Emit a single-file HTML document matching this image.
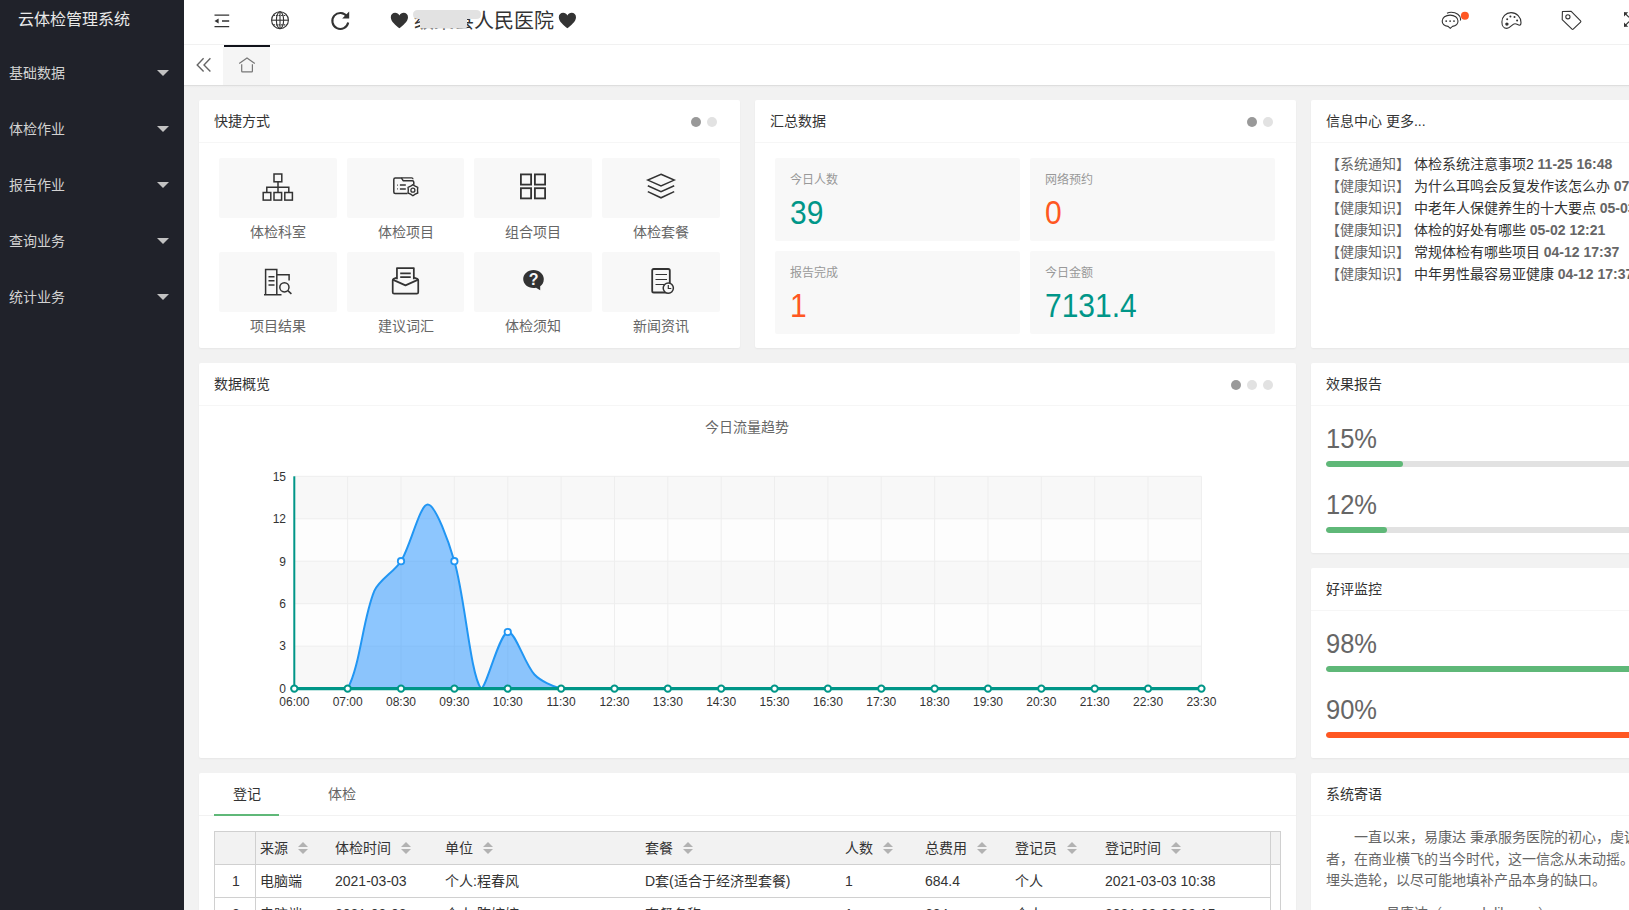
<!DOCTYPE html><html lang="zh-CN"><head><meta charset="utf-8"><title>云体检管理系统</title><style>
*{margin:0;padding:0;box-sizing:border-box}
html,body{width:1629px;height:910px;overflow:hidden}
body{position:relative;background:#f2f2f2;font-family:"Liberation Sans",sans-serif;font-size:14px;color:#333}
.a{position:absolute}
.side{left:0;top:0;width:184px;height:910px;background:#20222a}
.logo{left:18px;top:8px;font-size:16px;color:#e9e9e9;line-height:24px;white-space:nowrap}
.mi{left:9px;font-size:14px;color:#d2d2d2;line-height:20px;white-space:nowrap;font-weight:500}
.tri{left:157px;width:0;height:0;border-left:6px solid transparent;border-right:6px solid transparent;border-top:6px solid #c2c2c2}
.hdr{left:184px;top:0;width:1445px;height:45px;background:#fff;border-bottom:1px solid #f1f1f1}
.tabs{left:184px;top:45px;width:1445px;height:40px;background:#fff}
.card{background:#fff;border-radius:2px;overflow:hidden;box-shadow:0 1px 2px 0 rgba(0,0,0,.05)}
.ch{left:0;top:0;right:0;height:43px;border-bottom:1px solid #f6f6f6;padding-left:15px;line-height:42px;font-size:14px;color:#333;white-space:nowrap}
.box{background:#f8f8f8;border-radius:2px}
.lbl{font-size:14px;color:#666;text-align:center;width:118px;line-height:20px;white-space:nowrap}
.dot{width:10px;height:10px;border-radius:50%;background:#e2e2e2}
.dk{background:#999}
.sb{background:#f8f8f8;border-radius:2px;width:245px;height:83px}
.sl{left:15px;top:14px;font-size:12px;color:#999;line-height:16px;white-space:nowrap}
.sn{left:15px;top:39px;font-size:30px;line-height:34px;white-space:nowrap;transform:scaleY(1.1);transform-origin:0 27.4px}
.info{left:15px;font-size:14px;line-height:20px;white-space:nowrap;color:#333}
.info b{font-weight:bold;color:#666}
.info i{font-style:normal;color:#666}
.big{left:15px;font-size:26px;color:#666;line-height:30px;white-space:nowrap;transform:scale(0.98,1.08);transform-origin:0 24px}
.pb{left:15px;width:511px;height:6px;border-radius:20px;background:#e2e2e2;overflow:hidden}
.pf{left:0;top:0;height:6px;border-radius:20px}
.ax{font-size:12px;color:#333;white-space:nowrap;line-height:14px}
.th{font-size:14px;color:#333;white-space:nowrap;line-height:20px}
.sort{width:0;height:0;border-left:5px solid transparent;border-right:5px solid transparent}
</style></head><body>
<div class="a side">
<div class="a logo">云体检管理系统</div>
<div class="a mi" style="top:63px">基础数据</div>
<div class="a tri" style="top:70px"></div>
<div class="a mi" style="top:119px">体检作业</div>
<div class="a tri" style="top:126px"></div>
<div class="a mi" style="top:175px">报告作业</div>
<div class="a tri" style="top:182px"></div>
<div class="a mi" style="top:231px">查询业务</div>
<div class="a tri" style="top:238px"></div>
<div class="a mi" style="top:287px">统计业务</div>
<div class="a tri" style="top:294px"></div>
</div>
<div class="a hdr"></div>
<svg class="a" style="left:210px;top:8px" width="24" height="26" viewBox="210 8 24 26"><path d="M214.5 15.2H229.2M222 21H229.2M214.5 26.6H229.2" stroke="#333" stroke-width="1.3" fill="none"/><path d="M214.5 21L218.6 18.4V23.6Z" fill="#333"/></svg>
<svg class="a" style="left:268px;top:8px" width="24" height="26" viewBox="268 8 24 26"><g fill="none" stroke="#333" stroke-width="1.1"><circle cx="280" cy="20.2" r="8.4"/><path d="M271.6 20.2H288.4"/><ellipse cx="280" cy="20.2" rx="3.6" ry="8.4"/><path d="M280 11.8V28.6"/><path d="M273.3 15.5H286.7M273.3 24.9H286.7" stroke-dasharray="1.6 1"/></g></svg>
<svg class="a" style="left:328px;top:8px" width="24" height="26" viewBox="328 8 24 26"><path d="M347 16.5A8 8 0 1 0 348.2 22.5" fill="none" stroke="#333" stroke-width="2.1"/><path d="M349.2 11.6V18.6H342.2Z" fill="#333"/></svg>
<svg class="a" style="left:390px;top:12px" width="20" height="17" viewBox="0 0 20 17"><path d="M9.4 16.3C6 13.3 0.8 9.6 0.8 5.2C0.8 2.6 2.8 0.8 5.1 0.8C7 0.8 8.5 1.9 9.4 3.4C10.3 1.9 11.8 0.8 13.7 0.8C16 0.8 18 2.6 18 5.2C18 9.6 12.8 13.3 9.4 16.3Z" fill="#333"/></svg>
<div class="a" style="left:414px;top:8px;font-size:20px;line-height:26px;color:#333;white-space:nowrap">级某县人民医院</div>
<svg class="a" style="left:412px;top:9px" width="70" height="21" viewBox="412 9 70 21"><path d="M418 10H476Q481 10 481 14.5Q481 19 476 19H467V26Q467 28.6 464.5 28.6H422.5Q420 28.6 420 26V19H418Q413 19 413 14.5Q413 10 418 10Z" fill="#e2e2e2"/></svg>
<svg class="a" style="left:558px;top:12px" width="20" height="17" viewBox="0 0 20 17"><path d="M9.4 16.3C6 13.3 0.8 9.6 0.8 5.2C0.8 2.6 2.8 0.8 5.1 0.8C7 0.8 8.5 1.9 9.4 3.4C10.3 1.9 11.8 0.8 13.7 0.8C16 0.8 18 2.6 18 5.2C18 9.6 12.8 13.3 9.4 16.3Z" fill="#333"/></svg>
<svg class="a" style="left:1436px;top:6px" width="36" height="28" viewBox="1436 6 36 28"><g fill="none" stroke="#333" stroke-width="1.1"><path d="M1450.3 28.3L1448 26.4C1444.6 26 1442.2 23.8 1442.2 21C1442.2 17.7 1445.7 15.1 1450.1 15.1C1454.5 15.1 1458 17.7 1458 21C1458 23.8 1455.6 26 1452.4 26.4Z"/><path d="M1447 13.3C1448.3 12.6 1449.6 12.3 1451.2 12.3C1456.3 12.3 1460.6 15.3 1460.6 19.2C1460.6 19.6 1460.5 20.1 1460.3 20.5"/></g><g fill="#333"><circle cx="1446.2" cy="21.1" r="0.9"/><circle cx="1450.1" cy="21.1" r="0.9"/><circle cx="1454" cy="21.1" r="0.9"/></g><circle cx="1464.9" cy="15.8" r="4" fill="#ff5722"/></svg>
<svg class="a" style="left:1498px;top:8px" width="28" height="24" viewBox="1498 8 28 24"><path d="M1511 12.6C1516.8 12.6 1521 17.3 1521 22.5C1521 24.3 1520.6 25.2 1519.5 25.2C1518 25.2 1517 23.7 1515 23.7C1512.2 23.7 1510.2 28.4 1506.8 28.4C1503.6 28.4 1501.9 25.3 1501.9 21.9C1501.9 16.9 1505.8 12.6 1511 12.6Z" fill="none" stroke="#333" stroke-width="1.1"/><g fill="#333"><circle cx="1507.2" cy="19.3" r="1"/><circle cx="1510.4" cy="16.5" r="1"/><circle cx="1514.5" cy="17.1" r="1"/><circle cx="1517.1" cy="20.5" r="1"/><circle cx="1506.9" cy="24.1" r="1.7"/></g></svg>
<svg class="a" style="left:1558px;top:8px" width="28" height="24" viewBox="1558 8 28 24"><path d="M1562.4 11.5L1571.2 11.3L1580.6 20.9Q1581.2 21.5 1580.6 22.1L1573.2 29.2Q1572.6 29.8 1572 29.2L1562.2 19.7Z" fill="none" stroke="#333" stroke-width="1.1" stroke-linejoin="round"/><circle cx="1567.9" cy="16.8" r="2.1" fill="none" stroke="#333" stroke-width="1.1"/></svg>
<svg class="a" style="left:1620px;top:8px" width="9" height="24" viewBox="1620 8 9 24"><path d="M1624.3 12.6L1629 17.3M1624.3 26.3L1629 21.6" stroke="#333" stroke-width="1.1" fill="none"/><path d="M1624 12.2H1628.2L1624 16.4Z M1624 26.8H1628.2L1624 22.6Z" fill="#333"/></svg>
<div class="a tabs"></div>
<div class="a" style="left:184px;top:85px;width:1445px;height:1px;background:#dedede"></div>
<div class="a" style="left:184px;top:86px;width:1445px;height:2px;background:linear-gradient(#ececec,#f2f2f2)"></div>
<svg class="a" style="left:194px;top:55px" width="20" height="20" viewBox="194 55 20 20"><path d="M203.6 58.2L197.2 64.9L203.6 71.6M210.4 58.2L204 64.9L210.4 71.6" fill="none" stroke="#666" stroke-width="1.4"/></svg>
<div class="a" style="left:223px;top:47px;width:47px;height:38px;background:#f5f5f5"></div>
<div class="a" style="left:224px;top:45px;width:46px;height:2px;background:#10121a"></div>
<svg class="a" style="left:236px;top:55px" width="22" height="20" viewBox="236 55 22 20"><path d="M239.2 63.6L247 58L254.8 63.6" fill="none" stroke="#777" stroke-width="1.2"/><path d="M241.7 64.3V71.2Q241.7 71.8 242.3 71.8H251.8Q252.4 71.8 252.4 71.2V64.3" fill="none" stroke="#777" stroke-width="1.2"/></svg>
<div class="a card" style="left:199px;top:100px;width:541px;height:248px">
<div class="a ch">快捷方式</div>
<div class="a box" style="left:20px;top:58px;width:118px;height:60px"></div><svg class="a" style="left:20px;top:58px" width="118" height="60" viewBox="-59 -29 118 60"><g fill="none" stroke="#333" stroke-width="1.5"><rect x="-4" y="-13" width="7.8" height="7.8"/><path d="M0-5.2V0.2M-11.2 5.5V0.2H10.8V5.5M0 0.2V5.5"/><rect x="-14.8" y="5.5" width="7.6" height="7.6"/><rect x="-4" y="5.5" width="7.6" height="7.6"/><rect x="6.8" y="5.5" width="7.6" height="7.6"/></g></svg><div class="a lbl" style="left:20px;top:122px">体检科室</div><div class="a box" style="left:148px;top:58px;width:117px;height:60px"></div><svg class="a" style="left:148px;top:58px" width="118" height="60" viewBox="-59 -29 118 60"><g fill="none" stroke="#333" stroke-width="1.5" stroke-linejoin="round"><path d="M1.5 6.5H-10.7Q-12.2 6.5 -12.2 5V-7.6Q-12.2 -9.1 -10.7 -9.1H-4.6L-2.9 -6.3H6.3Q7.8 -6.3 7.8 -4.8V-2.2"/><path d="M-4.6 -9.1H5.6Q7 -9.1 7 -7.7" stroke-width="1.3"/><path d="M-6.1 -1.9H-0.2M-6.1 1.9H-0.2" stroke-width="1.5"/><path d="M-8.9 -1.9H-8.1M-8.9 1.9H-8.1" stroke-width="1.2"/></g><path d="M6.90 -2.40 L9.20 -0.78 L11.75 0.40 L11.50 3.20 L11.75 6.00 L9.20 7.18 L6.90 8.80 L4.60 7.18 L2.05 6.00 L2.30 3.20 L2.05 0.40 L4.60 -0.78Z" fill="#f8f8f8" stroke="#333" stroke-width="1.4" stroke-linejoin="round"/><circle cx="6.9" cy="3.2" r="2" fill="none" stroke="#333" stroke-width="1.3"/></svg><div class="a lbl" style="left:148px;top:122px">体检项目</div><div class="a box" style="left:275px;top:58px;width:118px;height:60px"></div><svg class="a" style="left:275px;top:58px" width="118" height="60" viewBox="-59 -29 118 60"><g fill="none" stroke="#333" stroke-width="1.8"><rect x="-12.1" y="-12.6" width="10.2" height="10.2"/><rect x="1.9" y="-12.6" width="10.2" height="10.2"/><rect x="-12.1" y="1.2" width="10.2" height="10.2"/><rect x="1.9" y="1.2" width="10.2" height="10.2"/></g></svg><div class="a lbl" style="left:275px;top:122px">组合项目</div><div class="a box" style="left:403px;top:58px;width:118px;height:60px"></div><svg class="a" style="left:403px;top:58px" width="118" height="60" viewBox="-59 -29 118 60"><g fill="none" stroke="#333" stroke-width="1.5" stroke-linejoin="miter"><path d="M0 -12.8L13.2 -6.9L0 -1.1L-13.2 -6.9Z"/><path d="M-13.2 -1.2L0 4.6L13.2 -1.2M-13.2 4.6L0 10.8L13.2 4.6"/></g></svg><div class="a lbl" style="left:403px;top:122px">体检套餐</div><div class="a box" style="left:20px;top:152px;width:118px;height:60px"></div><svg class="a" style="left:20px;top:152px" width="118" height="60" viewBox="-59 -28 118 60"><g fill="none" stroke="#333" stroke-width="1.5"><path d="M-12.4 14.8V-10.4H-1.2V14.8M-14 14.8H3.5M-1.2 -5.3H11.1V0.5"/><path d="M-9.5 -3.3H-3.5M-9.5 0.8H-3.5M-9.5 4.9H-3.5"/><circle cx="6.4" cy="7.3" r="4.6"/><path d="M9.8 10.6L13.4 13.9"/></g></svg><div class="a lbl" style="left:20px;top:216px">项目结果</div><div class="a box" style="left:148px;top:152px;width:117px;height:60px"></div><svg class="a" style="left:148px;top:152px" width="118" height="60" viewBox="-59 -28 118 60"><g transform="translate(-1,-1.6) scale(0.96)" fill="none" stroke="#333" stroke-width="1.8" stroke-linejoin="round"><path d="M-8.4 1V-10.8H9.2V1"/><path d="M-5 -5.2H6M-5 -1.3H6"/><path d="M-8.4 -1L-11.8 0.5Q-12.8 1 -12.8 2V14.3Q-12.8 15.8 -11.3 15.8H12.3Q13.8 15.8 13.8 14.3V2Q13.8 1 12.8 0.5L9.2 -1"/><path d="M-12.8 1.3L0.5 7.3L13.8 1.3"/></g></svg><div class="a lbl" style="left:148px;top:216px">建议词汇</div><div class="a box" style="left:275px;top:152px;width:118px;height:60px"></div><svg class="a" style="left:275px;top:152px" width="118" height="60" viewBox="-59 -28 118 60"><path d="M0.5 -10C6.2 -10 10.8 -6 10.8 -1C10.8 2.5 9.3 4.8 7.2 6.2L7.2 10.3L3 7.7C2.2 7.9 1.4 8 0.5 8C-5.2 8 -9.8 4 -9.8 -1C-9.8 -6 -5.2 -10 0.5 -10Z" fill="#333"/><text x="0.6" y="4.8" font-size="16" font-weight="bold" fill="#f8f8f8" text-anchor="middle" font-family="Liberation Sans">?</text></svg><div class="a lbl" style="left:275px;top:216px">体检须知</div><div class="a box" style="left:403px;top:152px;width:118px;height:60px"></div><svg class="a" style="left:403px;top:152px" width="118" height="60" viewBox="-59 -28 118 60"><g fill="none" stroke="#333"><rect x="-8.8" y="-11" width="17.6" height="23.5" rx="1.6" stroke-width="1.8"/><path d="M-5.5 -5.5H6M-5.5 -0.5H6M-5.5 4.5H3" stroke-width="1.2"/></g><circle cx="7.3" cy="8.1" r="5.1" fill="#f8f8f8" stroke="#333" stroke-width="1.5"/><path d="M7.3 4.9V8.5H10.3" fill="none" stroke="#333" stroke-width="1.2"/></svg><div class="a lbl" style="left:403px;top:216px">新闻资讯</div><div class="a dot dk" style="left:492px;top:16.5px"></div><div class="a dot" style="left:508px;top:16.5px"></div>
</div>
<div class="a card" style="left:755px;top:100px;width:541px;height:248px">
<div class="a ch">汇总数据</div>
<div class="a sb" style="left:20px;top:58px"><div class="a sl">今日人数</div><div class="a sn" style="color:#009688">39</div></div><div class="a sb" style="left:275px;top:58px"><div class="a sl">网络预约</div><div class="a sn" style="color:#ff5722">0</div></div><div class="a sb" style="left:20px;top:151px"><div class="a sl">报告完成</div><div class="a sn" style="color:#ff5722">1</div></div><div class="a sb" style="left:275px;top:151px"><div class="a sl">今日金额</div><div class="a sn" style="color:#009688">7131.4</div></div><div class="a dot dk" style="left:492px;top:16.5px"></div><div class="a dot" style="left:508px;top:16.5px"></div>
</div>
<div class="a card" style="left:1311px;top:100px;width:541px;height:248px">
<div class="a ch">信息中心 更多...</div>
<div class="a info" style="top:54px"><i>【系统通知】</i> 体检系统注意事项2 <b>11-25 16:48</b></div><div class="a info" style="top:76px"><i>【健康知识】</i> 为什么耳鸣会反复发作该怎么办 <b>07-</b></div><div class="a info" style="top:98px"><i>【健康知识】</i> 中老年人保健养生的十大要点 <b>05-03 </b></div><div class="a info" style="top:120px"><i>【健康知识】</i> 体检的好处有哪些 <b>05-02 12:21</b></div><div class="a info" style="top:142px"><i>【健康知识】</i> 常规体检有哪些项目 <b>04-12 17:37</b></div><div class="a info" style="top:164px"><i>【健康知识】</i> 中年男性最容易亚健康 <b>04-12 17:37</b></div>
</div>
<div class="a card" style="left:199px;top:363px;width:1097px;height:395px">
<div class="a ch">数据概览</div>
<div class="a dot dk" style="left:1032px;top:17px"></div><div class="a dot" style="left:1048px;top:17px"></div><div class="a dot" style="left:1064px;top:17px"></div><div class="a" style="left:-1px;top:54px;width:1097px;text-align:center;font-size:14px;line-height:20px;color:#666">今日流量趋势</div>
</div>
<svg class="a" style="left:0;top:0" width="1629" height="910" viewBox="0 0 1629 910"><rect x="294.3" y="646.14" width="907.10" height="42.46" fill="#f8f8f8"/><rect x="294.3" y="603.68" width="907.10" height="42.46" fill="#fdfdfd"/><rect x="294.3" y="561.22" width="907.10" height="42.46" fill="#f8f8f8"/><rect x="294.3" y="518.76" width="907.10" height="42.46" fill="#fdfdfd"/><rect x="294.3" y="476.30" width="907.10" height="42.46" fill="#f8f8f8"/><path d="M294.3 688.60H1201.4" stroke="#eee" stroke-width="1"/><path d="M294.3 646.14H1201.4" stroke="#eee" stroke-width="1"/><path d="M294.3 603.68H1201.4" stroke="#eee" stroke-width="1"/><path d="M294.3 561.22H1201.4" stroke="#eee" stroke-width="1"/><path d="M294.3 518.76H1201.4" stroke="#eee" stroke-width="1"/><path d="M294.3 476.30H1201.4" stroke="#eee" stroke-width="1"/><path d="M294.30 476.3V688.6" stroke="#eee" stroke-width="1"/><path d="M347.66 476.3V688.6" stroke="#eee" stroke-width="1"/><path d="M401.02 476.3V688.6" stroke="#eee" stroke-width="1"/><path d="M454.38 476.3V688.6" stroke="#eee" stroke-width="1"/><path d="M507.74 476.3V688.6" stroke="#eee" stroke-width="1"/><path d="M561.10 476.3V688.6" stroke="#eee" stroke-width="1"/><path d="M614.46 476.3V688.6" stroke="#eee" stroke-width="1"/><path d="M667.82 476.3V688.6" stroke="#eee" stroke-width="1"/><path d="M721.18 476.3V688.6" stroke="#eee" stroke-width="1"/><path d="M774.54 476.3V688.6" stroke="#eee" stroke-width="1"/><path d="M827.90 476.3V688.6" stroke="#eee" stroke-width="1"/><path d="M881.26 476.3V688.6" stroke="#eee" stroke-width="1"/><path d="M934.62 476.3V688.6" stroke="#eee" stroke-width="1"/><path d="M987.98 476.3V688.6" stroke="#eee" stroke-width="1"/><path d="M1041.34 476.3V688.6" stroke="#eee" stroke-width="1"/><path d="M1094.70 476.3V688.6" stroke="#eee" stroke-width="1"/><path d="M1148.06 476.3V688.6" stroke="#eee" stroke-width="1"/><path d="M1201.42 476.3V688.6" stroke="#eee" stroke-width="1"/><clipPath id="cg"><rect x="294.3" y="456.3" width="916.7" height="232.3"/></clipPath><path clip-path="url(#cg)" d="M294.30,688.60 C294.30,688.60 312.98,688.60 320.98,688.60 C328.98,688.60 344.32,688.60 347.66,688.60 C360.33,665.41 362.86,618.34 374.34,590.94 C378.87,580.13 394.78,571.31 401.02,561.22 C410.79,545.41 419.70,504.61 427.70,504.61 C435.70,504.61 449.18,543.30 454.38,561.22 C465.19,598.49 470.25,674.26 481.06,688.60 C486.26,688.60 498.85,634.34 507.74,631.99 C514.86,630.10 524.43,663.85 534.42,674.45 C540.44,680.83 552.60,686.35 561.10,688.60 C568.61,688.60 579.78,688.60 587.78,688.60 C595.78,688.60 606.46,688.60 614.46,688.60 C622.46,688.60 633.14,688.60 641.14,688.60 C649.14,688.60 659.82,688.60 667.82,688.60 C675.82,688.60 686.50,688.60 694.50,688.60 C702.50,688.60 713.18,688.60 721.18,688.60 C729.18,688.60 739.86,688.60 747.86,688.60 C755.86,688.60 766.54,688.60 774.54,688.60 C782.54,688.60 793.22,688.60 801.22,688.60 C809.22,688.60 819.90,688.60 827.90,688.60 C835.90,688.60 846.58,688.60 854.58,688.60 C862.58,688.60 873.26,688.60 881.26,688.60 C889.26,688.60 899.94,688.60 907.94,688.60 C915.94,688.60 926.62,688.60 934.62,688.60 C942.62,688.60 953.30,688.60 961.30,688.60 C969.30,688.60 979.98,688.60 987.98,688.60 C995.98,688.60 1006.66,688.60 1014.66,688.60 C1022.66,688.60 1033.34,688.60 1041.34,688.60 C1049.34,688.60 1060.02,688.60 1068.02,688.60 C1076.02,688.60 1086.70,688.60 1094.70,688.60 C1102.70,688.60 1113.38,688.60 1121.38,688.60 C1129.38,688.60 1140.06,688.60 1148.06,688.60 C1156.06,688.60 1166.74,688.60 1174.74,688.60 C1182.74,688.60 1201.42,688.60 1201.42,688.60 L1201.42,688.6 L294.3,688.6Z" fill="rgba(30,144,255,0.5)" /><path clip-path="url(#cg)" d="M294.30,688.60 C294.30,688.60 312.98,688.60 320.98,688.60 C328.98,688.60 344.32,688.60 347.66,688.60 C360.33,665.41 362.86,618.34 374.34,590.94 C378.87,580.13 394.78,571.31 401.02,561.22 C410.79,545.41 419.70,504.61 427.70,504.61 C435.70,504.61 449.18,543.30 454.38,561.22 C465.19,598.49 470.25,674.26 481.06,688.60 C486.26,688.60 498.85,634.34 507.74,631.99 C514.86,630.10 524.43,663.85 534.42,674.45 C540.44,680.83 552.60,686.35 561.10,688.60 C568.61,688.60 579.78,688.60 587.78,688.60 C595.78,688.60 606.46,688.60 614.46,688.60 C622.46,688.60 633.14,688.60 641.14,688.60 C649.14,688.60 659.82,688.60 667.82,688.60 C675.82,688.60 686.50,688.60 694.50,688.60 C702.50,688.60 713.18,688.60 721.18,688.60 C729.18,688.60 739.86,688.60 747.86,688.60 C755.86,688.60 766.54,688.60 774.54,688.60 C782.54,688.60 793.22,688.60 801.22,688.60 C809.22,688.60 819.90,688.60 827.90,688.60 C835.90,688.60 846.58,688.60 854.58,688.60 C862.58,688.60 873.26,688.60 881.26,688.60 C889.26,688.60 899.94,688.60 907.94,688.60 C915.94,688.60 926.62,688.60 934.62,688.60 C942.62,688.60 953.30,688.60 961.30,688.60 C969.30,688.60 979.98,688.60 987.98,688.60 C995.98,688.60 1006.66,688.60 1014.66,688.60 C1022.66,688.60 1033.34,688.60 1041.34,688.60 C1049.34,688.60 1060.02,688.60 1068.02,688.60 C1076.02,688.60 1086.70,688.60 1094.70,688.60 C1102.70,688.60 1113.38,688.60 1121.38,688.60 C1129.38,688.60 1140.06,688.60 1148.06,688.60 C1156.06,688.60 1166.74,688.60 1174.74,688.60 C1182.74,688.60 1201.42,688.60 1201.42,688.60" fill="none" stroke="#2196f3" stroke-width="2"/><path d="M294.3 688.6H1201.6" stroke="#009688" stroke-width="3.3"/><path d="M294.3 476.3V688.6" stroke="#009688" stroke-width="2"/><circle cx="294.30" cy="688.6" r="3.2" fill="#fff" stroke="#009688" stroke-width="2"/><circle cx="347.66" cy="688.6" r="3.2" fill="#fff" stroke="#009688" stroke-width="2"/><circle cx="401.02" cy="688.6" r="3.2" fill="#fff" stroke="#009688" stroke-width="2"/><circle cx="454.38" cy="688.6" r="3.2" fill="#fff" stroke="#009688" stroke-width="2"/><circle cx="507.74" cy="688.6" r="3.2" fill="#fff" stroke="#009688" stroke-width="2"/><circle cx="561.10" cy="688.6" r="3.2" fill="#fff" stroke="#009688" stroke-width="2"/><circle cx="614.46" cy="688.6" r="3.2" fill="#fff" stroke="#009688" stroke-width="2"/><circle cx="667.82" cy="688.6" r="3.2" fill="#fff" stroke="#009688" stroke-width="2"/><circle cx="721.18" cy="688.6" r="3.2" fill="#fff" stroke="#009688" stroke-width="2"/><circle cx="774.54" cy="688.6" r="3.2" fill="#fff" stroke="#009688" stroke-width="2"/><circle cx="827.90" cy="688.6" r="3.2" fill="#fff" stroke="#009688" stroke-width="2"/><circle cx="881.26" cy="688.6" r="3.2" fill="#fff" stroke="#009688" stroke-width="2"/><circle cx="934.62" cy="688.6" r="3.2" fill="#fff" stroke="#009688" stroke-width="2"/><circle cx="987.98" cy="688.6" r="3.2" fill="#fff" stroke="#009688" stroke-width="2"/><circle cx="1041.34" cy="688.6" r="3.2" fill="#fff" stroke="#009688" stroke-width="2"/><circle cx="1094.70" cy="688.6" r="3.2" fill="#fff" stroke="#009688" stroke-width="2"/><circle cx="1148.06" cy="688.6" r="3.2" fill="#fff" stroke="#009688" stroke-width="2"/><circle cx="1201.42" cy="688.6" r="3.2" fill="#fff" stroke="#009688" stroke-width="2"/><circle cx="401.02" cy="561.22" r="3.2" fill="#fff" stroke="#2196f3" stroke-width="1.8"/><circle cx="454.38" cy="561.22" r="3.2" fill="#fff" stroke="#2196f3" stroke-width="1.8"/><circle cx="507.74" cy="631.99" r="3.2" fill="#fff" stroke="#2196f3" stroke-width="1.8"/><text x="286" y="692.90" text-anchor="end" font-size="12" fill="#333" font-family="Liberation Sans">0</text><text x="286" y="650.44" text-anchor="end" font-size="12" fill="#333" font-family="Liberation Sans">3</text><text x="286" y="607.98" text-anchor="end" font-size="12" fill="#333" font-family="Liberation Sans">6</text><text x="286" y="565.52" text-anchor="end" font-size="12" fill="#333" font-family="Liberation Sans">9</text><text x="286" y="523.06" text-anchor="end" font-size="12" fill="#333" font-family="Liberation Sans">12</text><text x="286" y="480.60" text-anchor="end" font-size="12" fill="#333" font-family="Liberation Sans">15</text><text x="294.30" y="706" text-anchor="middle" font-size="12" fill="#333" font-family="Liberation Sans">06:00</text><text x="347.66" y="706" text-anchor="middle" font-size="12" fill="#333" font-family="Liberation Sans">07:00</text><text x="401.02" y="706" text-anchor="middle" font-size="12" fill="#333" font-family="Liberation Sans">08:30</text><text x="454.38" y="706" text-anchor="middle" font-size="12" fill="#333" font-family="Liberation Sans">09:30</text><text x="507.74" y="706" text-anchor="middle" font-size="12" fill="#333" font-family="Liberation Sans">10:30</text><text x="561.10" y="706" text-anchor="middle" font-size="12" fill="#333" font-family="Liberation Sans">11:30</text><text x="614.46" y="706" text-anchor="middle" font-size="12" fill="#333" font-family="Liberation Sans">12:30</text><text x="667.82" y="706" text-anchor="middle" font-size="12" fill="#333" font-family="Liberation Sans">13:30</text><text x="721.18" y="706" text-anchor="middle" font-size="12" fill="#333" font-family="Liberation Sans">14:30</text><text x="774.54" y="706" text-anchor="middle" font-size="12" fill="#333" font-family="Liberation Sans">15:30</text><text x="827.90" y="706" text-anchor="middle" font-size="12" fill="#333" font-family="Liberation Sans">16:30</text><text x="881.26" y="706" text-anchor="middle" font-size="12" fill="#333" font-family="Liberation Sans">17:30</text><text x="934.62" y="706" text-anchor="middle" font-size="12" fill="#333" font-family="Liberation Sans">18:30</text><text x="987.98" y="706" text-anchor="middle" font-size="12" fill="#333" font-family="Liberation Sans">19:30</text><text x="1041.34" y="706" text-anchor="middle" font-size="12" fill="#333" font-family="Liberation Sans">20:30</text><text x="1094.70" y="706" text-anchor="middle" font-size="12" fill="#333" font-family="Liberation Sans">21:30</text><text x="1148.06" y="706" text-anchor="middle" font-size="12" fill="#333" font-family="Liberation Sans">22:30</text><text x="1201.42" y="706" text-anchor="middle" font-size="12" fill="#333" font-family="Liberation Sans">23:30</text></svg>
<div class="a card" style="left:1311px;top:363px;width:541px;height:190px">
<div class="a ch">效果报告</div>
<div class="a big" style="top:61px">15%</div><div class="a pb" style="top:98px"><div class="a pf" style="width:15%;background:#5fb878"></div></div><div class="a big" style="top:127px">12%</div><div class="a pb" style="top:164px"><div class="a pf" style="width:12%;background:#5fb878"></div></div>
</div>
<div class="a card" style="left:1311px;top:568px;width:541px;height:190px">
<div class="a ch">好评监控</div>
<div class="a big" style="top:61px">98%</div><div class="a pb" style="top:98px"><div class="a pf" style="width:98%;background:#5fb878"></div></div><div class="a big" style="top:127px">90%</div><div class="a pb" style="top:164px"><div class="a pf" style="width:90%;background:#ff5722"></div></div>
</div>
<div class="a card" style="left:199px;top:773px;width:1097px;height:200px">
<div class="a" style="left:0;top:42px;width:1097px;height:1px;background:#f2f2f2"></div><div class="a" style="left:15px;top:11px;width:65px;text-align:center;line-height:20px;color:#333">登记</div><div class="a" style="left:15px;top:41px;width:65px;height:2px;background:#5fb878"></div><div class="a" style="left:110px;top:11px;width:65px;text-align:center;line-height:20px;color:#666">体检</div><div class="a" style="left:15px;top:58px;width:1067px;height:34px;background:#f2f2f2;border:1px solid #d0d0d0"></div><div class="a" style="left:15px;top:91px;width:1057px;height:60px;border-left:1px solid #d0d0d0;border-right:1px solid #d0d0d0"></div><div class="a" style="left:1081px;top:91px;width:1px;height:60px;background:#d0d0d0"></div><div class="a" style="left:15px;top:124px;width:1057px;height:1px;background:#d0d0d0"></div><div class="a" style="left:56px;top:58px;width:1px;height:100px;background:#d0d0d0"></div><div class="a" style="left:1071px;top:58px;width:1px;height:34px;background:#d0d0d0"></div><div class="a th" style="left:61px;top:65px">来源</div><div class="a sort" style="left:99px;top:69px;border-bottom:5px solid #b2b2b2"></div><div class="a sort" style="left:99px;top:76px;border-top:5px solid #b2b2b2"></div><div class="a th" style="left:136px;top:65px">体检时间</div><div class="a sort" style="left:202px;top:69px;border-bottom:5px solid #b2b2b2"></div><div class="a sort" style="left:202px;top:76px;border-top:5px solid #b2b2b2"></div><div class="a th" style="left:246px;top:65px">单位</div><div class="a sort" style="left:284px;top:69px;border-bottom:5px solid #b2b2b2"></div><div class="a sort" style="left:284px;top:76px;border-top:5px solid #b2b2b2"></div><div class="a th" style="left:446px;top:65px">套餐</div><div class="a sort" style="left:484px;top:69px;border-bottom:5px solid #b2b2b2"></div><div class="a sort" style="left:484px;top:76px;border-top:5px solid #b2b2b2"></div><div class="a th" style="left:646px;top:65px">人数</div><div class="a sort" style="left:684px;top:69px;border-bottom:5px solid #b2b2b2"></div><div class="a sort" style="left:684px;top:76px;border-top:5px solid #b2b2b2"></div><div class="a th" style="left:726px;top:65px">总费用</div><div class="a sort" style="left:778px;top:69px;border-bottom:5px solid #b2b2b2"></div><div class="a sort" style="left:778px;top:76px;border-top:5px solid #b2b2b2"></div><div class="a th" style="left:816px;top:65px">登记员</div><div class="a sort" style="left:868px;top:69px;border-bottom:5px solid #b2b2b2"></div><div class="a sort" style="left:868px;top:76px;border-top:5px solid #b2b2b2"></div><div class="a th" style="left:906px;top:65px">登记时间</div><div class="a sort" style="left:972px;top:69px;border-bottom:5px solid #b2b2b2"></div><div class="a sort" style="left:972px;top:76px;border-top:5px solid #b2b2b2"></div><div class="a th" style="left:33px;top:98px">1</div><div class="a th" style="left:61px;top:98px">电脑端</div><div class="a th" style="left:136px;top:98px">2021-03-03</div><div class="a th" style="left:246px;top:98px">个人:程春风</div><div class="a th" style="left:446px;top:98px">D套(适合于经济型套餐)</div><div class="a th" style="left:646px;top:98px">1</div><div class="a th" style="left:726px;top:98px">684.4</div><div class="a th" style="left:816px;top:98px">个人</div><div class="a th" style="left:906px;top:98px">2021-03-03 10:38</div><div class="a th" style="left:33px;top:131px">2</div><div class="a th" style="left:61px;top:131px">电脑端</div><div class="a th" style="left:136px;top:131px">2021-03-03</div><div class="a th" style="left:246px;top:131px">个人:陈婷婷</div><div class="a th" style="left:446px;top:131px">套餐名称</div><div class="a th" style="left:646px;top:131px">1</div><div class="a th" style="left:726px;top:131px">684</div><div class="a th" style="left:816px;top:131px">个人</div><div class="a th" style="left:906px;top:131px">2021-03-03 09:15</div>
</div>
<div class="a card" style="left:1311px;top:773px;width:541px;height:200px">
<div class="a ch">系统寄语</div>
<div class="a" style="left:15px;top:54px;font-size:14px;line-height:21.7px;color:#666;white-space:nowrap"><span style="padding-left:28px">一直以来，易康达 秉承服务医院的初心，虔诚做一个产品的匠人，一个真正的服务</span><br>者，在商业横飞的当今时代，这一信念从未动摇。我们一直坚持默默<br>埋头造轮，以尽可能地填补产品本身的缺口。</div><div class="a" style="left:75px;top:129px;font-size:14px;line-height:22px;color:#666;white-space:nowrap">易康达（www.ykdjk.com）</div>
</div>
</body></html>
